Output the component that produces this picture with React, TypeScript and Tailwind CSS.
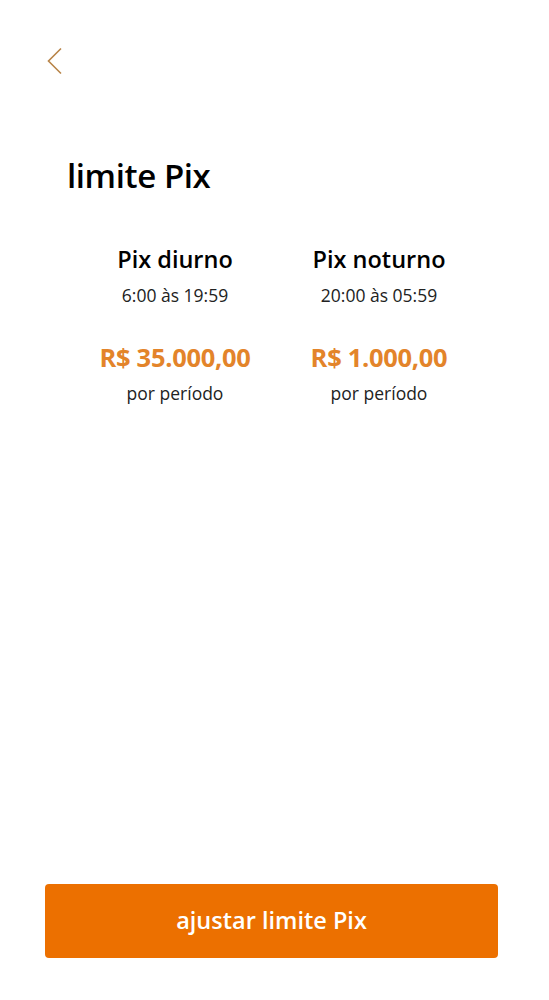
const periods = [
  { title: "Pix diurno", hours: "6:00 às 19:59", value: "R$ 35.000,00" },
  { title: "Pix noturno", hours: "20:00 às 05:59", value: "R$ 1.000,00" },
];

export default function App() {
  return (
    <div
      className="w-[549px] h-[1000px] bg-white flex flex-col text-[#1a1a1a]"
      style={{ fontFamily: '"Open Sans", "Noto Sans", sans-serif' }}
    >
      <div className="pl-[47px] pt-[47px]">
        {/* back chevron */}
        <svg width="16" height="28" viewBox="0 0 16 28" fill="none">
          <polyline points="14,1.5 1.5,14 14,26.5" stroke="#b88448" strokeWidth="1.6" />
        </svg>
      </div>

      <h1 className="ml-[67px] mt-[81px] text-[33px] leading-[40px] font-semibold tracking-[-0.4px] text-black">
        limite Pix
      </h1>

      <div className="ml-[73px] w-[408px] mt-[47px] grid grid-cols-2">
        {periods.map((p) => (
          <div key={p.title} className="flex flex-col items-center">
            <div className="text-[23.5px] leading-[32px] font-semibold text-black">{p.title}</div>
            <div className="mt-[8px] text-[17.5px] leading-[24px] text-[#222]">{p.hours}</div>
            <div className="mt-[33px] text-[25.5px] leading-[34px] font-bold text-[#e3842a] tracking-[-0.3px]">
              {p.value}
            </div>
            <div className="mt-[7px] text-[17.5px] leading-[24px] text-[#222]">por período</div>
          </div>
        ))}
      </div>

      <div className="flex-1" />

      <div className="px-[45px] pb-[42px]">
        <button className="w-[453px] h-[74px] rounded-[4px] bg-[#ec7000] text-white text-[23.5px] font-semibold flex items-center justify-center">
          ajustar limite Pix
        </button>
      </div>
    </div>
  );
}
